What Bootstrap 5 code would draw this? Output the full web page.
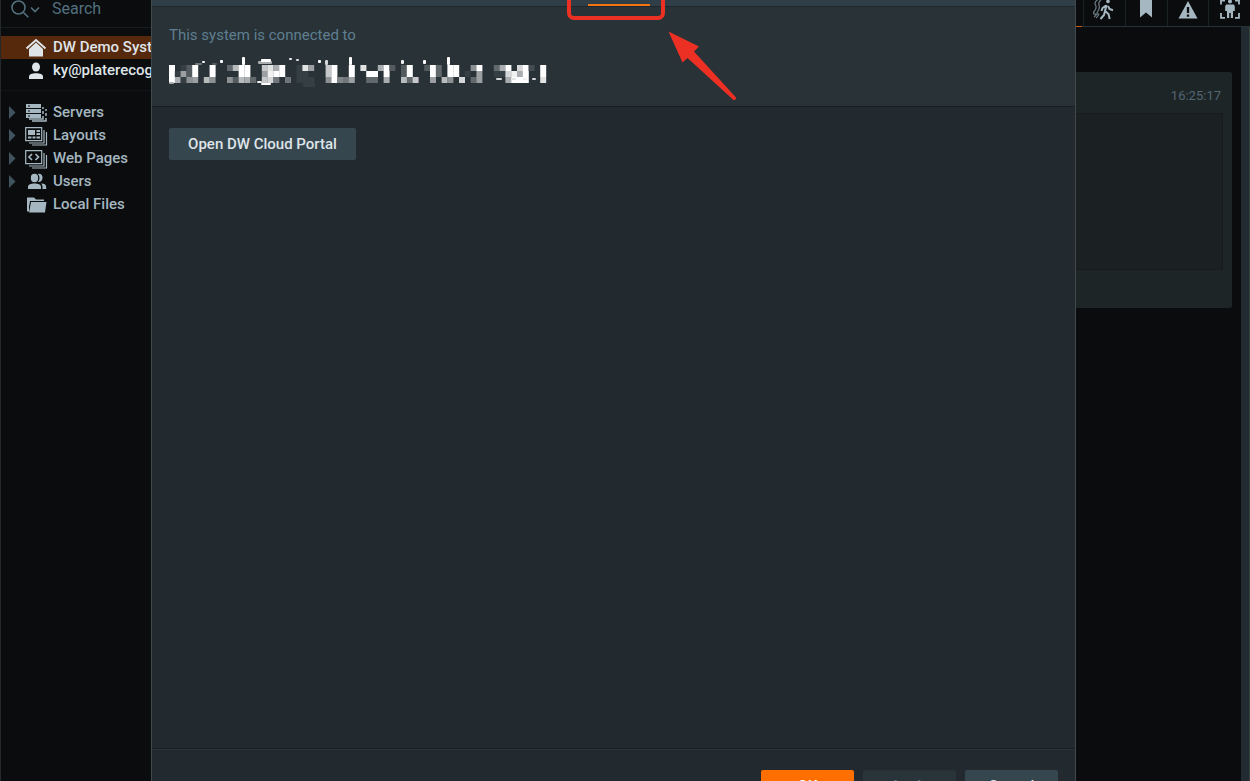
<!DOCTYPE html>
<html lang="en">
<head>
<meta charset="utf-8">
<meta name="viewport" content="width=device-width, initial-scale=1">
<title>System Administration</title>
<link href="https://cdn.jsdelivr.net/npm/bootstrap@5.3.0/dist/css/bootstrap.min.css" rel="stylesheet">
<style>
  body { font-family: Roboto, "Liberation Sans", sans-serif; font-size: 15px; line-height: 23px; background: #0a0c0e; color: #a5b7c0; }
  .side { width: 151px; border-left: 1px solid #25292b; }
  .search { height: 28px; border-bottom: 1px solid #171c1f; padding-left: 10px; }
  .search input { background: none; border: 0; outline: 0; color: #53707f; width: 90px; height: 16px; padding: 0; margin-left: 11px; font-size: 16px; }
  .search input::placeholder { color: #53707f; opacity: 1; }
  .account { padding-top: 8px; height: 63px; border-bottom: 1px solid #121517; }
  .tree { padding-top: 10px; }
  .item { height: 23px; color: #a5b7c0; font-weight: 500; white-space: nowrap; text-decoration: none; }
  .item .tri { width: 24px; padding-left: 7px; flex: none; }
  .item .pic { width: 22px; margin-right: 6px; flex: none; }
  .account .item { color: #dfe4e8; }
  .account .current { background: #56290d; }
  .dialog { background: #222a30; border-left: 1px solid #42494c; border-right: 1px solid #42494c; }
  .tabs-strip { height: 7px; background: #2f3e47; border-bottom: 1px solid #1e272c; }
  .tab-line { position: absolute; left: 436px; top: 4px; width: 62px; height: 2px; background: #f47510; }
  .mark-box { position: absolute; left: 415px; top: -20px; width: 98px; height: 40px; border: 4px solid #ed3024; border-radius: 7px; }
  .arrow { position: absolute; left: 515px; top: 30px; }
  .head { background: #283237; height: 100px; padding: 17px; border-bottom: 1px solid #181e22; }
  .head p { color: #5f7f90; line-height: 23px; margin-bottom: 4px; }
  .push { border: 0; border-radius: 2px; background: #36464f; color: #dfe4e8; font-weight: 500; height: 32px; line-height: 32px; padding: 0; font-size: 15px; }
  .portal { width: 187px; }
  .content-area { padding: 21px 17px; }
  .foot { height: 33px; border-top: 1px solid #181e22; box-shadow: inset 0 1px #2b353b; padding: 21px 17px 0; gap: 9px; }
  .foot .push { width: 93px; flex: none; }
  .foot .go { background: #ff6f00; color: #fff; }
  .foot .off { background: #29343a; color: #68767e; }
  .events { width: 174px; }
  .icon-tabs { height: 27px; border-bottom: 1px solid #26323a; padding-left: 7px; }
  .icon-tabs button { flex: 1 1 0; border: 0; border-left: 1px solid #1b2225; background: none; padding: 0; color: #a5b7c0; }
  .active-line { position: absolute; left: 0; top: 26px; width: 6px; height: 1px; background: #c55a10; }
  .tile { margin: 45px 9px 0 0; height: 236px; background: #1e2527; border-radius: 0 2px 2px 0; }
  .tile time { height: 41px; line-height: 47px; padding-right: 11px; font-size: 13px; color: #516672; }
  .preview { height: 157px; margin-right: 9px; background: #1b2023; border: 1px solid #161b1d; border-left: 0; }
  .rail { width: 9px; background: #222b31; border-right: 1px solid #33413d; }
  svg { display: block; flex: none; }
</style>
</head>
<body class="vh-100 overflow-hidden">
<svg width="0" height="0" class="position-absolute" aria-hidden="true">
  <symbol id="tri" viewBox="0 0 8 13"><path d="M1 0l6.500 6.500L1 13z" fill="#40545f"/></symbol>
</svg>
<div class="d-flex h-100">
  <aside class="side flex-shrink-0 overflow-hidden">
    <div class="search d-flex align-items-start">
      <svg width="30" height="18" viewBox="0 0 30 18" fill="none" stroke="#53707f" stroke-width="1.6"><circle cx="7.500" cy="7.500" r="6.500"/><path d="M12.300 12.300l5 5M20 7.500l4 4 4-4"/></svg>
      <input type="text" placeholder="Search" aria-label="Search">
    </div>
    <div class="account">
      <a href="#" class="item current d-flex align-items-center"><span class="tri"></span><span class="pic"><svg width="22" height="22" viewBox="0 0 22 22"><path d="M4 11.500l7-6.500 7 6.500V19.500H4z" fill="#dfe4e8"/><path d="M1.500 11.500L11 3l9.500 8.500" fill="none" stroke="#dfe4e8" stroke-width="2"/><path d="M3 12.500l8-7.300 8 7.300" fill="none" stroke="#56290d" stroke-width=".8"/></svg></span>DW Demo System</a>
      <a href="#" class="item d-flex align-items-center"><span class="tri"></span><span class="pic"><svg width="22" height="20" viewBox="0 0 22 20" fill="#dfe4e8"><ellipse cx="11" cy="6" rx="4" ry="4.500"/><path d="M4 18v-2c0-3 3-3.700 7-3.700s7 .7 7 3.700v2z"/></svg></span>ky@platerecognizer.com</a>
    </div>
    <nav class="tree">
      <a href="#" class="item d-flex align-items-center"><span class="tri"><svg width="8" height="13"><use href="#tri"/></svg></span><span class="pic"><svg width="22" height="19" viewBox="0 0 22 19"><g fill="#a5b7c0"><rect x="1" y="1" width="15" height="4"/><rect x="1" y="6" width="15" height="4"/><rect x="1" y="11" width="15" height="4"/></g><g fill="#0a0c0e"><path d="M3 2.500h2v1H3zM3 7.500h2v1H3zM3 12.500h2v1H3z"/></g><path d="M4 16h14v-3M7 18h14v-3M18 4v2M18 8v3M21 6v2M21 10v3" fill="none" stroke="#a5b7c0" stroke-width="1.500"/></svg></span>Servers</a>
      <a href="#" class="item d-flex align-items-center"><span class="tri"><svg width="8" height="13"><use href="#tri"/></svg></span><span class="pic"><svg width="23" height="20" viewBox="0 0 23 20"><path d="M.7 1.700h16v13H.7zM4 17h15V4M7 19h14.500V6" fill="none" stroke="#a5b7c0" stroke-width="1.200"/><path d="M3 4h7v5H3zM11.500 4H15v2h-3.500zM11.500 7H15v2h-3.500zM3 10.500h3.500v2H3zM7.500 10.500h3v2h-3zM11.500 10.500H15v2h-3.500z" fill="#a5b7c0"/></svg></span>Layouts</a>
      <a href="#" class="item d-flex align-items-center"><span class="tri"><svg width="8" height="13"><use href="#tri"/></svg></span><span class="pic"><svg width="23" height="20" viewBox="0 0 23 20" fill="none" stroke="#a5b7c0"><path d="M.7 1.700h16v13H.7zM4 17h15V4M7 19h14.500V6" stroke-width="1.200"/><path d="M7 5L4 8l3 3M10.500 5l3 3-3 3" stroke-width="1.700"/></svg></span>Web Pages</a>
      <a href="#" class="item d-flex align-items-center"><span class="tri"><svg width="8" height="13"><use href="#tri"/></svg></span><span class="pic"><svg width="22" height="18" viewBox="0 0 22 18" fill="#a5b7c0"><ellipse cx="9.500" cy="5" rx="3.700" ry="4.200"/><path d="M3 16v-2c0-2.700 3-3.500 6.500-3.500S16 11.300 16 14v2zM13 1c3-.7 4.700 1.500 4.500 4S15.500 9.500 13 9c2-2.300 2-5.700 0-8zM16 10.500c3.500 0 5.200 1 5.200 3.500v2h-3.700v-2c0-1.500-.5-2.700-1.500-3.500z"/></svg></span>Users</a>
      <a href="#" class="item d-flex align-items-center"><span class="tri"></span><span class="pic"><svg width="22" height="18" viewBox="0 0 22 18" fill="#a5b7c0"><path d="M2 1.500h7l2 2h8V5H5L4 11v4.500H2z"/><path d="M6 6h15.500L20 16.500H4z"/></svg></span>Local Files</a>
    </nav>
  </aside>

  <main class="dialog flex-grow-1 d-flex flex-column position-relative overflow-hidden">
    <div class="tabs-strip flex-shrink-0"></div>
    <div class="tab-line"></div>
    <div class="mark-box"></div>
    <svg class="arrow" width="72" height="72" viewBox="0 0 72 72" aria-hidden="true"><path d="M1.500 1.500L32 16.500l-5 5L69 67.500q.3 2.700-2.500 2.500L20.500 28l-5 4.500z" fill="#ed3024"/></svg>
    <header class="head flex-shrink-0">
      <p>This system is connected to</p>
      <svg id="account" width="380" height="36" viewBox="0 0 380 36" role="img" aria-label="Hidden account address"></svg>
    </header>
    <section class="content-area flex-grow-1">
      <button type="button" class="push portal">Open DW Cloud Portal</button>
    </section>
    <footer class="foot d-flex justify-content-end flex-shrink-0">
      <button type="button" class="push go">OK</button>
      <button type="button" class="push off" disabled>Apply</button>
      <button type="button" class="push">Cancel</button>
    </footer>
  </main>

  <aside class="events flex-shrink-0 d-flex flex-column position-relative">
    <div class="icon-tabs d-flex flex-shrink-0">
      <button type="button" aria-label="Motion"><svg class="mx-auto" width="22" height="26" viewBox="0 0 22 26" fill="none" stroke="#a5b7c0"><circle cx="15" cy="1.500" r="1.800" fill="#a5b7c0" stroke="none"/><path d="M13.500 5l-1.500 6 3.500 3 1.200 5M12 11l-1 4-3.500 4M13 5.500L9.500 8 8.500 11M15 6l1.500 3 3.500 1.300" stroke-width="2"/><path d="M8 0Q5 2 6 5T5 11t0 3-2 4M4.500 0Q1 2 2.500 5T1.500 11t.5 3-1 3" stroke="#68767e" stroke-width="1.300"/></svg></button>
      <button type="button" aria-label="Bookmarks"><svg class="mx-auto" width="14" height="26" viewBox="0 0 14 26"><path d="M1 0h12v17.500l-6-5-6 5z" fill="#a5b7c0"/></svg></button>
      <button type="button" aria-label="Alerts"><svg class="mx-auto" width="20" height="26" viewBox="0 0 20 26"><path d="M10 1l9.500 17.500H.5z" fill="#a5b7c0"/><path d="M10 7v6M10 14.500v2.300" stroke="#0a0c0e" stroke-width="2.300"/></svg></button>
      <button type="button" aria-label="Objects"><svg class="mx-auto" width="20" height="26" viewBox="0 0 20 26" fill="none" stroke="#a5b7c0" stroke-width="1.800"><path d="M1 4.500V.5h4M15 .5h4v4M1 13v4.800h4M15 17.800h4V13"/><circle cx="10" cy="1.500" r="2" fill="#a5b7c0" stroke="none"/><path d="M6 4.500h8V11h-1v7h-2.200v-5H9.200v5H7v-7H6z" fill="#a5b7c0" stroke="none"/><path d="M5.700 5.500V11M14.300 5.500V11" stroke-width="1"/></svg></button>
    </div>
    <div class="active-line"></div>
    <div class="d-flex flex-grow-1">
      <div class="flex-grow-1">
        <div class="tile">
          <time class="d-block text-end">16:25:17</time>
          <div class="preview"></div>
        </div>
      </div>
      <div class="rail"></div>
    </div>
  </aside>
</div>
<script>
  // Mosaic over the account address: one hex digit per cell is its brightness, a dot is an empty cell.
  const rows = [
    "f.13f..f..4aff..bd9f..1d8..bf..f.d..9f3.3f..3f4.ff..7f..49f.cf2.f",
    "f183f..f....ff..8eff..11...bf..f..ff.f..3f...f4.ff.1.8..11ce9f..f",
    "f9178.a7..73a94.bc5.5.111..7f658..44.9..a4b..8.a7.c.48....9fff..d"
  ];
  // Parts of the letters that stick out above and below the mosaic: x, y, width, height, brightness.
  const scraps = [[0,30,5,2,9],[33,9,3,2,15],[51,8,3,3,15],[73,5,3,8,15],[89,9,14,3,9],[92,7,10,3,15],[88,29,5,2,14],[92,31,10,2,15],[120,6,3,2,14],[127,7,3,2,13],[149,8,3,3,15],[156,8,3,5,12],[180,5,3,8,15],[232,8,3,4,14],[254,8,3,4,15],[278,5,3,8,15],[134,31,12,4,1],[26,11,7,2,5],[43,11,5,2,3],[327,26,6,2,12],[342,26,5,2,13],[354,26,4,2,14],[363,26,4,2,12]];
  const low = [40, 50, 55];
  const shade = v => "rgb(" + low.map(c => Math.round(c + (255 - c) * v / 15)).join() + ")";
  let out = "";
  rows.forEach((row, r) => [...row].forEach((d, c) => {
    if (d !== ".") out += `<rect x="${c * 5.8}" y="${14 + r * 6}" width="6" height="6" fill="${shade(parseInt(d, 16))}"/>`;
  }));
  scraps.forEach(([x, y, w, h, v]) => out += `<rect x="${x}" y="${y + 1}" width="${w}" height="${h}" rx="1" fill="${shade(v)}"/>`);
  document.getElementById("account").innerHTML = out;
</script>
<script src="https://cdn.jsdelivr.net/npm/bootstrap@5.3.0/dist/js/bootstrap.bundle.min.js"></script>
</body>
</html>
